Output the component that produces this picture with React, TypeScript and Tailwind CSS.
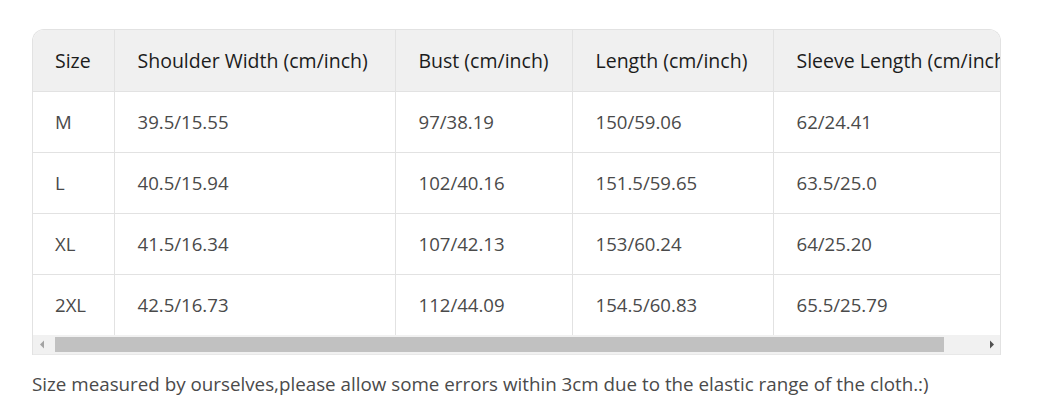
import React from "react";

const headers = [
  "Size",
  "Shoulder Width (cm/inch)",
  "Bust (cm/inch)",
  "Length (cm/inch)",
  "Sleeve Length (cm/inch)",
];

const rows = [
  ["M", "39.5/15.55", "97/38.19", "150/59.06", "62/24.41"],
  ["L", "40.5/15.94", "102/40.16", "151.5/59.65", "63.5/25.0"],
  ["XL", "41.5/16.34", "107/42.13", "153/60.24", "64/25.20"],
  ["2XL", "42.5/16.73", "112/44.09", "154.5/60.83", "65.5/25.79"],
];

const widths = ["w-[81px]", "w-[281px]", "w-[177px]", "w-[201px]", "w-[277px]"];

export default function App() {
  return (
    <div
      className="min-h-[407px] w-[1042px] bg-white pl-[32px] pt-[29px]"
      style={{ fontFamily: '"Open Sans", "Noto Sans", sans-serif' }}
    >
      <div className="w-[969px] overflow-hidden rounded-t-[12px] border border-b-0 border-[#e2e2e2]">
        <div className="overflow-hidden">
          <table className="w-[1017px] table-fixed border-collapse">
            <thead>
              <tr className="h-[61px] bg-[#f0f0f0]">
                {headers.map((h, i) => (
                  <th
                    key={h}
                    className={`${widths[i]} whitespace-nowrap border-l border-[#e2e2e2] px-[23px] text-left text-[19.5px] font-normal text-[#1c1c1c] first:border-l-0 first:pl-[22px]`}
                  >
                    {h}
                  </th>
                ))}
              </tr>
            </thead>
            <tbody>
              {rows.map((r) => (
                <tr key={r[0]} className="h-[61px] border-t border-[#e2e2e2]">
                  {r.map((c, i) => (
                    <td
                      key={i}
                      className="whitespace-nowrap border-l border-[#e2e2e2] px-[23px] text-left text-[18.6px] text-[#4a4a4a] first:border-l-0 first:pl-[22px]"
                    >
                      {c}
                    </td>
                  ))}
                </tr>
              ))}
            </tbody>
          </table>
        </div>
        <div className="flex h-[20px] items-center border-b border-[#e8e8e8] bg-[#f1f1f1]">
          <div className="flex h-full w-[17px] items-center justify-center">
            <svg width="6" height="9" viewBox="0 0 6 9">
              <path d="M5 0.5 L1 4.5 L5 8.5 Z" fill="#a3a3a3" />
            </svg>
          </div>
          <div className="flex h-full flex-1 items-center px-[5px]">
            <div className="h-[15px] w-[889px] bg-[#c1c1c1]" />
          </div>
          <div className="flex h-full w-[17px] items-center justify-center">
            <svg width="6" height="9" viewBox="0 0 6 9">
              <path d="M1 0.5 L5 4.5 L1 8.5 Z" fill="#505050" />
            </svg>
          </div>
        </div>
      </div>
      <p className="mt-[15px] text-[18.8px] leading-[28px] text-[#4a4a4a]">
        Size measured by ourselves,please allow some errors within 3cm due to the elastic range of the cloth.:)
      </p>
    </div>
  );
}
